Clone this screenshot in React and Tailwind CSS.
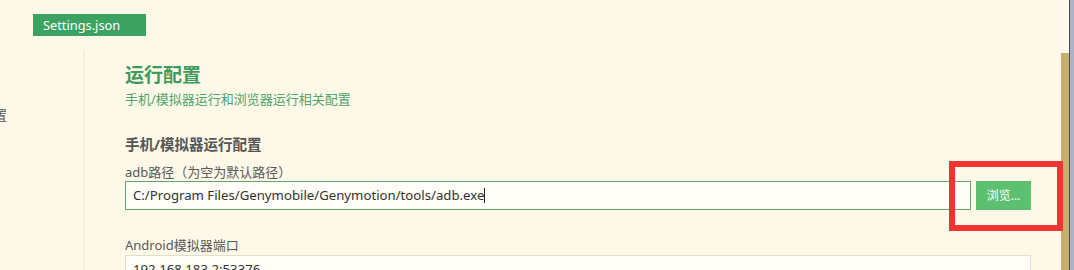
import React from 'react';

const font = { fontFamily: '"Noto Sans", "Noto Sans CJK SC", sans-serif' };

const App = () => {
  return (
    <div className="w-[1074px] h-[270px] overflow-hidden flex bg-[#fdf8e8] relative" style={font}>
      {/* Main panel */}
      <div className="flex-1 flex flex-col min-w-0">
        <div className="pt-[14px] pl-[33px]">
          <div className="w-[113px] h-[22px] bg-[#3ba35f] text-white text-[12.8px] leading-[22px] pl-[10px]">
            Settings.json
          </div>
        </div>

        <div className="flex flex-1 mt-[14px]">
          {/* Sidebar (scrolled off left) */}
          <div className="w-[85px] shrink-0 border-r-2 border-[#f4efde] overflow-hidden">
            <div className="mt-[56px] -ml-[6px] text-[13px] text-[#555] leading-[18px]">置</div>
          </div>

          {/* Content */}
          <div className="pl-[40px] pt-[13px] flex flex-col">
            <div className="text-[19px] leading-[25px] font-bold text-[#3d9b5c]">运行配置</div>
            <div className="mt-[2px] text-[13px] leading-[18px] text-[#4fa56b]">手机/模拟器运行和浏览器运行相关配置</div>

            <div className="mt-[26px] text-[14.5px] leading-[20px] font-bold text-[#555]">手机/模拟器运行配置</div>

            <div className="mt-[10px] text-[13px] leading-[17px] text-[#5a5a5a]">adb路径（为空为默认路径）</div>
            <div className="flex gap-[5px] items-center">
              <div className="w-[846px] h-[29px] border border-[#5fa970] bg-[#fffdf7] flex items-center pl-[7px] text-[13.2px] text-[#333]">
                <span>C:/Program Files/Genymobile/Genymotion/tools/adb.exe</span>
                <span className="w-px h-[15px] bg-[#222]" />
              </div>
              <button className="w-[55px] h-[29px] bg-[#5dbf70] text-white text-[12px]">浏览...</button>
            </div>

            <div className="mt-[27px] text-[13px] leading-[17px] text-[#5a5a5a]">Android模拟器端口</div>
            <div className="mt-px w-[906px] h-[29px] border border-[#e3dfcc] bg-[#fffdf7] flex items-center pl-[7px] text-[13.2px] text-[#333]">
              192.168.183.2:53376
            </div>
          </div>
        </div>
      </div>

      {/* Scrollbar */}
      <div className="w-[8px] flex flex-col">
        <div className="h-[53px] bg-[#fffbee]" />
        <div className="flex-1 bg-[#c9ae6b]" />
      </div>
      <div className="w-px bg-[#4a4a55]" />
      <div className="w-[4px] bg-[#aeb2c6]" />

      {/* Annotation box */}
      <div className="absolute left-[949px] top-[161px] w-[114px] h-[70px] border-[6px] border-[#f03434]" />
    </div>
  );
};

export default App;
